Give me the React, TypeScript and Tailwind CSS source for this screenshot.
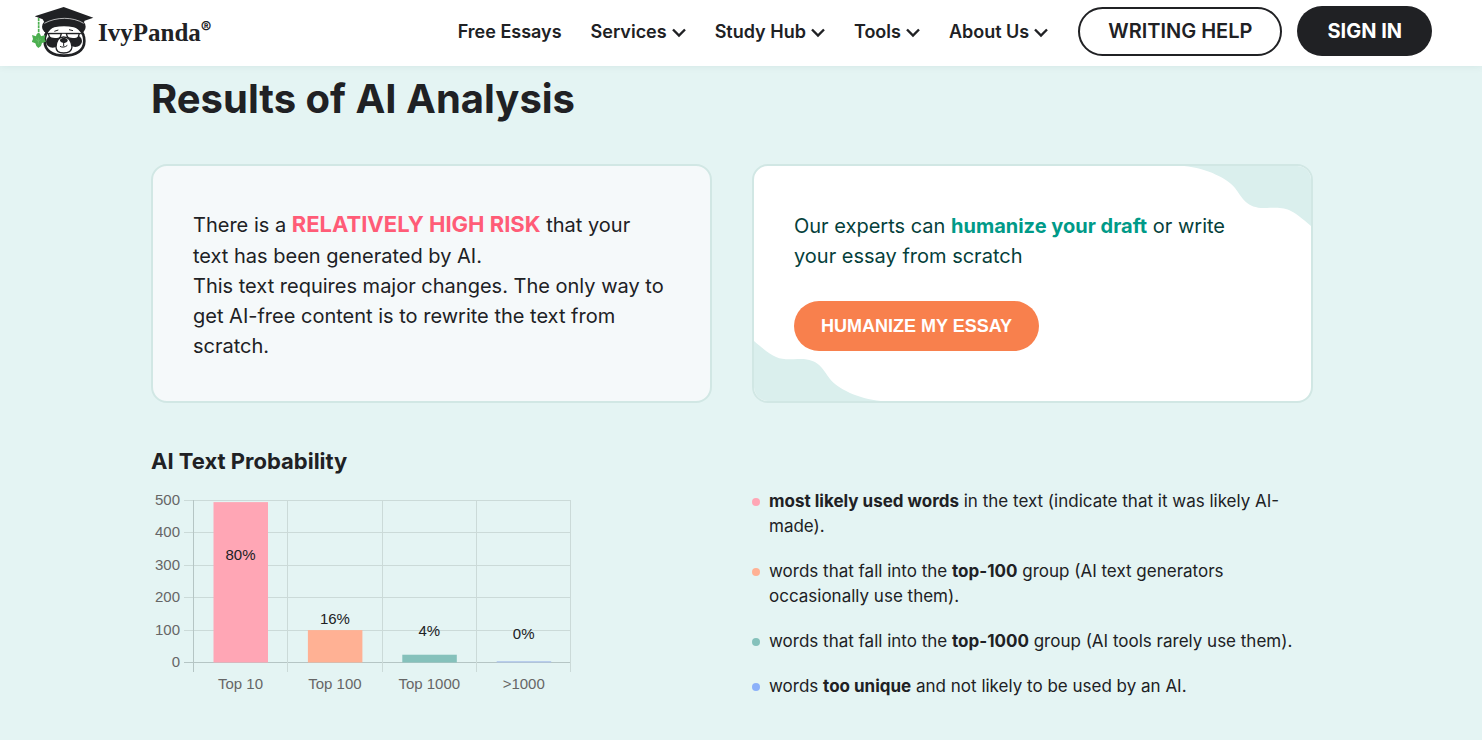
const navItems = [
  { label: 'Free Essays', hasMenu: false },
  { label: 'Services', hasMenu: true },
  { label: 'Study Hub', hasMenu: true },
  { label: 'Tools', hasMenu: true },
  { label: 'About Us', hasMenu: true },
];

const bars = [
  { label: 'Top 10', value: 495, percent: '80%', color: '#ffa6b5', labelY: 69 },
  { label: 'Top 100', value: 100, percent: '16%', color: '#ffb194', labelY: 133 },
  { label: 'Top 1000', value: 24, percent: '4%', color: '#85c1bb', labelY: 145 },
  { label: '>1000', value: 4, percent: '0%', color: '#adc4ea', labelY: 148 },
];

const ticks = [
  { value: 500, y: 9.5 },
  { value: 400, y: 41.5 },
  { value: 300, y: 74.5 },
  { value: 200, y: 106.5 },
  { value: 100, y: 139.5 },
  { value: 0, y: 171.5 },
];

const columns = [42.5, 136.5, 231.5, 325.5, 419.5];

function PandaMark() {
  return (
    <svg className="h-[53px] w-[62px]" viewBox="35 12 186 159" aria-hidden="true">
      {/* ears and head */}
      <ellipse cx="86" cy="77" rx="21" ry="20" fill="#202124" />
      <ellipse cx="177" cy="77" rx="19" ry="20" fill="#202124" />
      <path d="M131 68c38 0 61 21 61 52 0 28-25 44-61 44s-58-16-58-44c0-31 20-52 58-52z" fill="#fff" stroke="#202124" strokeWidth="8" />
      <path d="M72 66c34-20 86-20 118 0l-6 22c-12-5-14-7-24-9-18-4-40-4-58 0-10 2-14 4-26 11z" fill="#202124" />
      {/* eye patches */}
      <ellipse cx="97" cy="122" rx="20" ry="18" fill="#202124" />
      <ellipse cx="165" cy="120" rx="20" ry="18" fill="#202124" />
      {/* glasses */}
      <path d="M84 98h39l-3 9c-3 8-29 8-33 0zM138 98h39l-3 9c-3 8-29 8-33 0z" fill="#fff" stroke="#202124" strokeWidth="4" />
      <path d="M72 100l14-3h90l16 3M102 91l12-4M146 86l12 3" fill="none" stroke="#202124" strokeWidth="3" />
      {/* muzzle */}
      <path d="M107 138c1-20 10-30 23-30s23 10 25 30c-1 12-11 18-25 18s-23-6-23-18z" fill="#fff" stroke="#202124" strokeWidth="4" />
      <path d="M119 117c3-8 20-8 23 0 1 6-7 9-11 9s-13-3-12-9z" fill="#202124" />
      <path d="M130 125v11m-11 0c6 4 16 3 22-3" fill="none" stroke="#202124" strokeWidth="3" />
      {/* graduation cap */}
      <path d="M43 46l87-28 89 32-26 9-5 10c-34-18-80-18-113 0l-8-14z" fill="#202124" />
      <path d="M72 67c36-20 86-20 118 0" fill="none" stroke="#fff" strokeWidth="2" />
      {/* tassel */}
      <path d="M55 51v50" stroke="#4caf50" strokeWidth="5" strokeDasharray="9 2" />
      <path d="M54 97c5 0 7 5 8 9l13-4-2 12 4 8-12 4-3 9-8 6-6-6-3-8-11-4 4-9-3-12 12 4c1-4 2-9 7-9z" fill="#4caf50" />
      <path d="M54 110v20m0-9l7-6m-7 6l-7-6" fill="none" stroke="#8fd092" strokeWidth="1" />
    </svg>
  );
}

function Chevron() {
  return (
    <svg className="h-[14px] w-[14px]" viewBox="0 0 14 14" fill="none" stroke="currentColor" strokeWidth="2.4" aria-hidden="true">
      <path d="M1 4.5L7 10.5L13 4.5" />
    </svg>
  );
}

function Header() {
  return (
    <header className="relative flex h-[66px] items-center justify-between bg-white pr-[50px] pl-8 shadow-[0_0_8px_rgba(0,80,70,0.08)]">
      <a href="#" className="flex items-center gap-1 pb-1">
        <PandaMark />
        <span className="flex pt-1 font-['Liberation_Serif',serif] text-[25px] leading-8 font-bold">
          IvyPanda
          <span className="font-['Inter',sans-serif] text-base leading-5">®</span>
        </span>
      </a>
      <div className="flex items-center pb-1">
        <nav className="flex items-center gap-[29px] pt-0.5">
          {navItems.map((item) => (
            <a key={item.label} href="#" className="flex items-center gap-[5px] text-lg leading-6 font-semibold">
              {item.label}
              {item.hasMenu && <Chevron />}
            </a>
          ))}
        </nav>
        <button className="ml-[30px] h-[49px] rounded-full border-2 border-[#202124] px-7 text-xl font-semibold">
          WRITING HELP
        </button>
        <button className="ml-[15px] h-[50px] rounded-full bg-[#202124] px-[30px] text-xl font-bold text-white">
          SIGN IN
        </button>
      </div>
    </header>
  );
}

function ProbabilityChart() {
  return (
    <svg
      className="h-[210px] w-[430px] font-['Liberation_Sans',sans-serif] text-[15px]"
      viewBox="0 0 430 210"
      role="img"
      aria-label="AI text probability by word group"
    >
      {ticks.map((tick) => (
        <g key={tick.value}>
          <path d={`M33 ${tick.y}H420`} stroke={tick.value === 0 ? '#b5c5c4' : '#cbdad8'} />
          <text x="29" y={tick.y + 4} textAnchor="end" fill="#666666">
            {tick.value}
          </text>
        </g>
      ))}
      {columns.map((x, i) => (
        <path key={x} d={`M${x} 9V181`} stroke={i === 0 ? '#b5c5c4' : '#cbdad8'} />
      ))}
      {bars.map((bar, i) => {
        const center = 89.5 + i * 94.4;
        const height = (bar.value / 500) * 162;
        return (
          <g key={bar.label} textAnchor="middle">
            <rect x={center - 27} y={171.5 - height} width="54.5" height={height} fill={bar.color} />
            <text x={center} y={bar.labelY} fill="#202124">
              {bar.percent}
            </text>
            <text x={center} y="198" fill="#666666">
              {bar.label}
            </text>
          </g>
        );
      })}
    </svg>
  );
}

export default function App() {
  return (
    <div className="min-h-screen bg-[#e4f4f3] font-['Inter',sans-serif] text-[#202124]">
      <Header />
      <main className="pr-[18px] pb-10">
        <div className="mx-auto max-w-[1162px]">
          <h1 className="pt-2 text-[40px] leading-[50px] font-bold">Results of AI Analysis</h1>

          <div className="mt-10 grid grid-cols-2 gap-10">
            <section className="rounded-2xl border-2 border-[#d1e7e4] bg-[#f5f9fa] px-10 pt-[41px] pb-10 text-xl leading-[30px]">
              <p>
                There is a <strong className="text-[22px] leading-[34px] font-bold text-[#ff5c77]">RELATIVELY HIGH RISK</strong> that
                your text has been generated by AI.
              </p>
              <p>
                This text requires major changes. The only way to get AI-free content is to rewrite the text from
                scratch.
              </p>
            </section>

            <section className="relative overflow-hidden rounded-2xl border-2 border-[#d1e7e4] bg-white px-10 pt-[45px] pb-10">
              <svg className="absolute top-0 right-0 h-[60px] w-[134px]" viewBox="0 0 134 60" fill="#daefed" aria-hidden="true">
                <path d="M7 0C30 2 51 13 58 22C66 33 70 43 90 42C110 41 113 42 134 60V0z" />
              </svg>
              <svg className="absolute bottom-0 left-0 h-[60px] w-[134px]" viewBox="0 0 134 60" fill="#daefed" aria-hidden="true">
                <path d="M127 60C104 58 83 47 76 38C68 27 64 17 44 18C24 19 21 18 0 0V60z" />
              </svg>
              <p className="relative max-w-[460px] text-xl leading-[30px] text-[#053f3b]">
                Our experts can <strong className="font-bold text-[#009a88]">humanize your draft</strong> or write
                your essay from scratch
              </p>
              <button className="relative mt-[30px] h-[50px] rounded-full bg-[#f8804d] px-[27px] font-['Liberation_Sans',sans-serif] text-lg font-bold text-white">
                HUMANIZE MY ESSAY
              </button>
            </section>
          </div>

          <h2 className="mt-[43px] text-[22px] leading-[30px] font-bold">AI Text Probability</h2>
          <div className="mt-[15px] grid grid-cols-2 gap-10">
            <ProbabilityChart />
            <ul className="-mt-[2px] space-y-5 text-[17px] leading-[25px]">
              <li className="flex gap-[9px]">
                <span className="mt-[9px] h-2 w-2 shrink-0 rounded-full bg-[#ffa6b5]" />
                <span>
                  <b className="font-bold">most likely used words</b> in the text (indicate that it was likely AI-<wbr />
                  made).
                </span>
              </li>
              <li className="flex gap-[9px]">
                <span className="mt-[9px] h-2 w-2 shrink-0 rounded-full bg-[#ffb194]" />
                <span>
                  words that fall into the <b className="font-bold">top-100</b> group (AI text generators
                  occasionally use them).
                </span>
              </li>
              <li className="flex gap-[9px]">
                <span className="mt-[9px] h-2 w-2 shrink-0 rounded-full bg-[#85c1bb]" />
                <span>
                  words that fall into the <b className="font-bold">top-1000</b> group (AI tools rarely use them).
                </span>
              </li>
              <li className="flex gap-[9px]">
                <span className="mt-[9px] h-2 w-2 shrink-0 rounded-full bg-[#8bb0f9]" />
                <span>
                  words <b className="font-bold">too unique</b> and not likely to be used by an AI.
                </span>
              </li>
            </ul>
          </div>
        </div>
      </main>
    </div>
  );
}
